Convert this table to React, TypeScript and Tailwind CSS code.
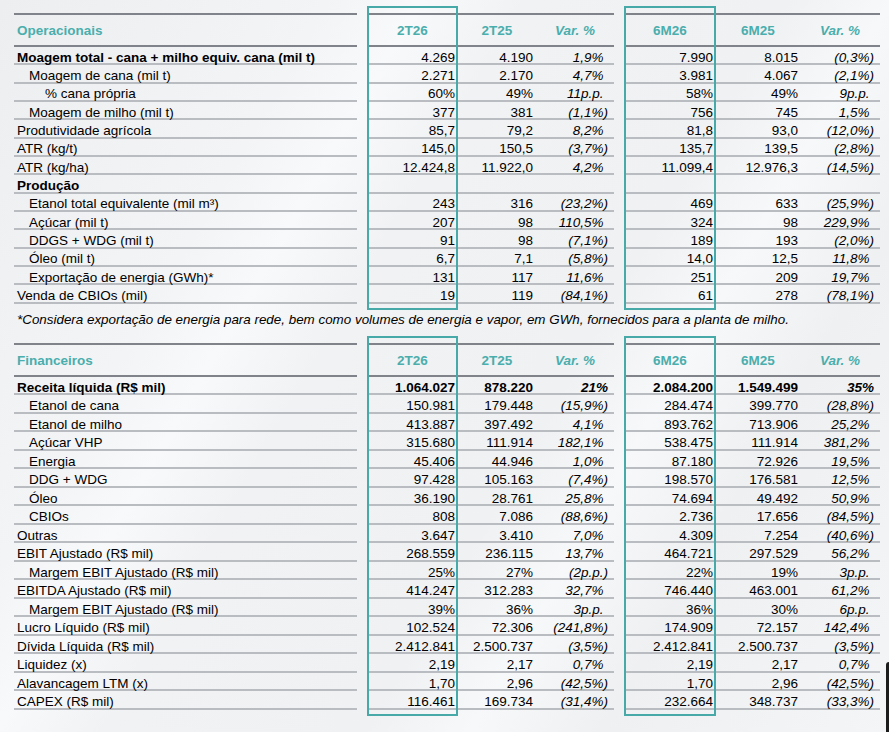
import React from "react";

type Row = { label: string; level: number; bold?: boolean; boldVals?: boolean; v?: string[] };

const ops: Row[] = [
  { label: "Moagem total - cana + milho equiv. cana (mil t)", level: 0, bold: true, v: ["4.269", "4.190", "1,9%", "7.990", "8.015", "(0,3%)"] },
  { label: "Moagem de cana (mil t)", level: 1, v: ["2.271", "2.170", "4,7%", "3.981", "4.067", "(2,1%)"] },
  { label: "% cana própria", level: 2, v: ["60%", "49%", "11p.p.", "58%", "49%", "9p.p."] },
  { label: "Moagem de milho (mil t)", level: 1, v: ["377", "381", "(1,1%)", "756", "745", "1,5%"] },
  { label: "Produtividade agrícola", level: 0, v: ["85,7", "79,2", "8,2%", "81,8", "93,0", "(12,0%)"] },
  { label: "ATR (kg/t)", level: 0, v: ["145,0", "150,5", "(3,7%)", "135,7", "139,5", "(2,8%)"] },
  { label: "ATR (kg/ha)", level: 0, v: ["12.424,8", "11.922,0", "4,2%", "11.099,4", "12.976,3", "(14,5%)"] },
  { label: "Produção", level: 0, bold: true },
  { label: "Etanol total equivalente (mil m³)", level: 1, v: ["243", "316", "(23,2%)", "469", "633", "(25,9%)"] },
  { label: "Açúcar (mil t)", level: 1, v: ["207", "98", "110,5%", "324", "98", "229,9%"] },
  { label: "DDGS + WDG (mil t)", level: 1, v: ["91", "98", "(7,1%)", "189", "193", "(2,0%)"] },
  { label: "Óleo (mil t)", level: 1, v: ["6,7", "7,1", "(5,8%)", "14,0", "12,5", "11,8%"] },
  { label: "Exportação de energia (GWh)*", level: 1, v: ["131", "117", "11,6%", "251", "209", "19,7%"] },
  { label: "Venda de CBIOs (mil)", level: 0, v: ["19", "119", "(84,1%)", "61", "278", "(78,1%)"] },
];

const fin: Row[] = [
  { label: "Receita líquida (R$ mil)", level: 0, bold: true, boldVals: true, v: ["1.064.027", "878.220", "21%", "2.084.200", "1.549.499", "35%"] },
  { label: "Etanol de cana", level: 1, v: ["150.981", "179.448", "(15,9%)", "284.474", "399.770", "(28,8%)"] },
  { label: "Etanol de milho", level: 1, v: ["413.887", "397.492", "4,1%", "893.762", "713.906", "25,2%"] },
  { label: "Açúcar VHP", level: 1, v: ["315.680", "111.914", "182,1%", "538.475", "111.914", "381,2%"] },
  { label: "Energia", level: 1, v: ["45.406", "44.946", "1,0%", "87.180", "72.926", "19,5%"] },
  { label: "DDG + WDG", level: 1, v: ["97.428", "105.163", "(7,4%)", "198.570", "176.581", "12,5%"] },
  { label: "Óleo", level: 1, v: ["36.190", "28.761", "25,8%", "74.694", "49.492", "50,9%"] },
  { label: "CBIOs", level: 1, v: ["808", "7.086", "(88,6%)", "2.736", "17.656", "(84,5%)"] },
  { label: "Outras", level: 0, v: ["3.647", "3.410", "7,0%", "4.309", "7.254", "(40,6%)"] },
  { label: "EBIT Ajustado (R$ mil)", level: 0, v: ["268.559", "236.115", "13,7%", "464.721", "297.529", "56,2%"] },
  { label: "Margem EBIT Ajustado (R$ mil)", level: 1, v: ["25%", "27%", "(2p.p.)", "22%", "19%", "3p.p."] },
  { label: "EBITDA Ajustado (R$ mil)", level: 0, v: ["414.247", "312.283", "32,7%", "746.440", "463.001", "61,2%"] },
  { label: "Margem EBIT Ajustado (R$ mil)", level: 1, v: ["39%", "36%", "3p.p.", "36%", "30%", "6p.p."] },
  { label: "Lucro Líquido (R$ mil)", level: 0, v: ["102.524", "72.306", "(241,8%)", "174.909", "72.157", "142,4%"] },
  { label: "Dívida Líquida (R$ mil)", level: 0, v: ["2.412.841", "2.500.737", "(3,5%)", "2.412.841", "2.500.737", "(3,5%)"] },
  { label: "Liquidez (x)", level: 0, v: ["2,19", "2,17", "0,7%", "2,19", "2,17", "0,7%"] },
  { label: "Alavancagem LTM (x)", level: 0, v: ["1,70", "2,96", "(42,5%)", "1,70", "2,96", "(42,5%)"] },
  { label: "CAPEX (R$ mil)", level: 0, v: ["116.461", "169.734", "(31,4%)", "232.664", "348.737", "(33,3%)"] },
];

const GRID = "grid grid-cols-[343px_10px_91px_82px_74px_10px_92px_84px_80px]";
const LINE = "border-b-2 border-[#b9bcc0] pt-[5px]";
const HEAD = "border-t-2 border-b-2 border-[#80848a] pt-[2px]";

function Var({ s, bold }: { s: string; bold?: boolean }) {
  const neg = s.startsWith("(");
  return (
    <span className={`italic ${bold ? "font-bold" : ""}`}>
      {s}
      {!neg && !bold && <span className="invisible">)</span>}
    </span>
  );
}

function DataRow({ r, h }: { r: Row; h: string }) {
  const pad = r.level === 0 ? "pl-[3px]" : r.level === 1 ? "pl-[15px]" : "pl-[31px]";
  const v = r.v ?? ["", "", "", "", "", ""];
  const lb = r.bold ? "font-bold" : "";
  const b = r.boldVals ? "font-bold" : "";
  const cell = `${LINE} flex items-center justify-end ${h}`;
  return (
    <div className={GRID}>
      <div className={`${LINE} ${h} flex items-center ${pad} ${lb} whitespace-nowrap`}>{r.label}</div>
      <div />
      <div className={`${cell} pr-[3px] ${b}`}>{v[0]}</div>
      <div className={`${cell} pr-[7px] ${b}`}>{v[1]}</div>
      <div className={`${cell} pr-[6px]`}>{v[2] && <Var s={v[2]} bold={r.boldVals} />}</div>
      <div />
      <div className={`${cell} pr-[3px] ${b}`}>{v[3]}</div>
      <div className={`${cell} pr-[2px] ${b}`}>{v[4]}</div>
      <div className={`${cell} pr-[6px]`}>{v[5] && <Var s={v[5]} bold={r.boldVals} />}</div>
    </div>
  );
}

function Table({ title, cols, rows, h }: { title: string; cols: string[]; rows: Row[]; h: string }) {
  const hc = `${HEAD} h-[34px] flex items-center justify-center font-bold text-[#4aaead]`;
  return (
    <div className="relative pt-[7px] pb-[6px]">
      <div className="absolute top-0 bottom-0 left-[353px] w-[91px] border-2 border-[#48aaa8]" />
      <div className="absolute top-0 bottom-0 left-[610px] w-[92px] border-2 border-[#48aaa8]" />
      <div className={GRID}>
        <div className={`${HEAD} h-[34px] flex items-center pl-[3px] font-bold text-[#4aaead]`}>{title}</div>
        <div />
        <div className={hc}>{cols[0]}</div>
        <div className={`${hc} pr-[4px]`}>{cols[1]}</div>
        <div className={`${hc} italic pr-[4px]`}>Var. %</div>
        <div />
        <div className={hc}>{cols[2]}</div>
        <div className={hc}>{cols[3]}</div>
        <div className={`${hc} italic`}>Var. %</div>
      </div>
      {rows.map((r, i) => (
        <DataRow key={i} r={r} h={h} />
      ))}
    </div>
  );
}

export default function App() {
  return (
    <div className="relative w-[889px] h-[732px] overflow-hidden bg-[#f1f2f4] bg-[linear-gradient(120deg,#eceef0_0%,#f3f4f6_25%,#f8f9fa_32%,#f1f2f4_40%,#f0f1f3_60%,#f7f8f9_68%,#eff0f2_78%,#f4f5f7_100%)] font-['Liberation_Sans',Arial,sans-serif] text-[13.5px] leading-[16px] text-black">
      <div className="pl-[14px] pt-[6px]">
        <Table title="Operacionais" cols={["2T26", "2T25", "6M26", "6M25"]} rows={ops} h="h-[18.35px]" />
        <div className="h-[20px] flex items-center pl-[3px] italic text-[13.4px] whitespace-nowrap">
          *Considera exportação de energia para rede, bem como volumes de energia e vapor, em GWh, fornecidos para a planta de milho.
        </div>
        <div className="h-[6px]" />
        <Table title="Financeiros" cols={["2T26", "2T25", "6M26", "6M25"]} rows={fin} h="h-[18.5px]" />
      </div>
      <div className="absolute right-0 top-[662px] w-[3px] h-[70px] bg-[#1c1c1c] rounded-tl-[3px]" />
    </div>
  );
}
